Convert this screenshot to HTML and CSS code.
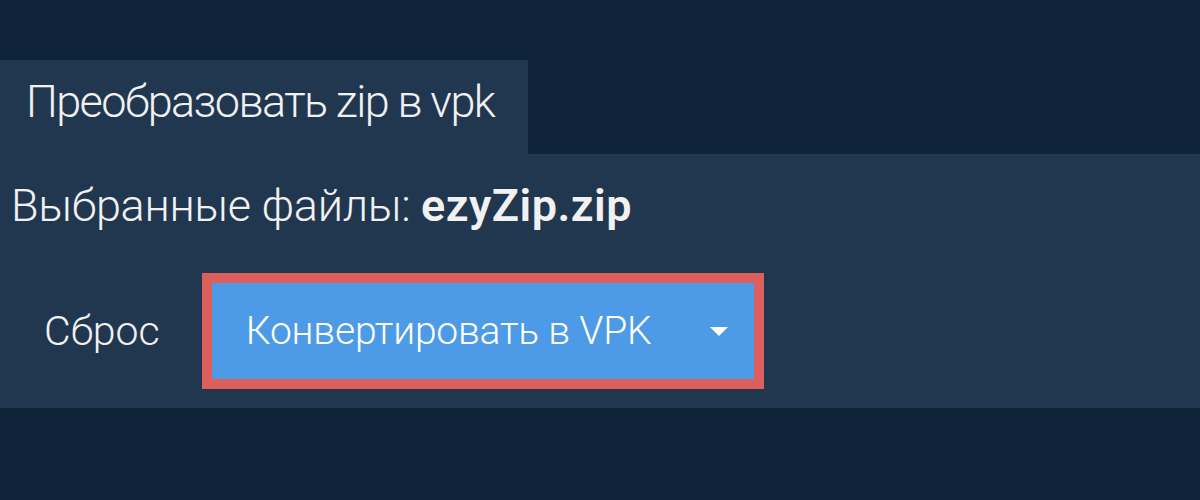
FILE: index.html
```html
<!DOCTYPE html>
<html lang="ru">
<head>
<meta charset="utf-8">
<link rel="stylesheet" href="styles.css">
</head>
<body>
<div class="page">
  <div class="tabs">
    <div class="tab">Преобразовать zip в vpk</div>
  </div>
  <div class="panel">
    <div class="files">Выбранные файлы: <b class="name">ezyZip.zip</b></div>
    <div class="actions">
      <span class="reset">Сброс</span>
      <div class="btn-outline">
        <button class="btn">
          <span class="btn-label">Конвертировать в VPK</span>
          <svg class="caret" width="18" height="9" viewBox="0 0 18 9"><path d="M0 0H18L9 9Z" fill="#fff"/></svg>
        </button>
      </div>
    </div>
  </div>
</div>
</body>
</html>
```
FILE: styles.css
```css
html, body {
  margin: 0;
  padding: 0;
  background: #0f2439;
  width: 1200px;
  height: 500px;
  overflow: hidden;
  font-family: Roboto, "Liberation Sans", sans-serif;
  color: #f1f1f1;
}
.page {
  padding-top: 60px;
}
.tabs {
  display: flex;
}
.tab {
  background: #213750;
  width: 528px;
  height: 94px;
  box-sizing: border-box;
  padding: 16px 0 0 26px;
  font-size: 45px;
  line-height: 52px;
  font-weight: 300;
  letter-spacing: -1.6px;
}
.panel {
  background: #213750;
  height: 254px;
  box-sizing: border-box;
  padding-top: 26px;
}
.files {
  padding-left: 11px;
  font-size: 45px;
  line-height: 52px;
  font-weight: 300;
  letter-spacing: -0.3px;
}
.name {
  font-weight: 600;
  letter-spacing: 0.5px;
}
.actions {
  display: flex;
  align-items: center;
  margin-top: 41px;
}
.reset {
  font-size: 41px;
  font-weight: 300;
  margin-left: 44px;
  margin-right: 42px;
}
.btn-outline {
  border: 10px solid #dc5f5c;
}
.btn {
  display: flex;
  align-items: center;
  width: 542px;
  height: 96px;
  border: 0;
  margin: 0;
  background: #4d9be6;
  color: #fff;
  font-family: Roboto, "Liberation Sans", sans-serif;
  font-size: 39px;
  font-weight: 300;
  letter-spacing: -0.2px;
  padding: 0 26px 0 34px;
  box-sizing: border-box;
  cursor: pointer;
}
.btn-label {
  flex: 1;
  text-align: left;
}
.caret {
  display: block;
}
```
